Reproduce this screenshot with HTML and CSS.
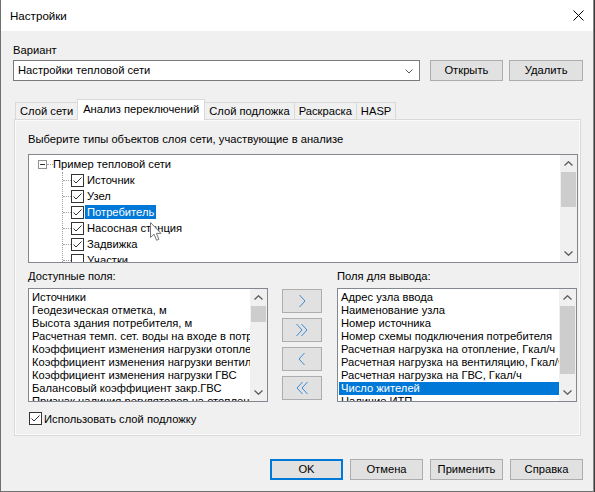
FILE: index.html
```html
<!DOCTYPE html>
<html lang="ru">
<head>
<meta charset="utf-8">
<title>Настройки</title>
<link rel="stylesheet" href="styles.css">
</head>
<body>
<div class="window">
  <div class="titlebar">
    <span class="title">Настройки</span>
    <svg class="close" width="11" height="11" viewBox="0 0 11 11"><path d="M0.5 0.5 L10.5 10.5 M10.5 0.5 L0.5 10.5" stroke="#000" stroke-width="1" fill="none"/></svg>
  </div>
  <div class="main">
    <div class="label">Вариант</div>
    <div class="variant-row">
      <div class="combo">
        <span class="combo-text">Настройки тепловой сети</span>
        <svg class="combo-arrow" width="8" height="5" viewBox="0 0 8 5"><path d="M0.5 0.5 L4 4 L7.5 0.5" stroke="#5a5a5a" fill="none"/></svg>
      </div>
      <button class="btn btn-top">Открыть</button>
      <button class="btn btn-top">Удалить</button>
    </div>
    <div class="tabs">
      <div class="tab">Слой сети</div>
      <div class="tab active">Анализ переключений</div>
      <div class="tab">Слой подложка</div>
      <div class="tab">Раскраска</div>
      <div class="tab">HASP</div>
    </div>
    <div class="panel">
      <div class="hint">Выберите типы объектов слоя сети, участвующие в анализе</div>
      <div class="tree box">
        <div class="tree-content">
          <div class="tree-root">
            <span class="expander"><span class="minus"></span></span><span class="root-dots"></span><span class="root-text">Пример тепловой сети</span>
          </div>
          <div class="tree-children">
            <div class="tree-item"><span class="hdots"></span><span class="cb checked"><svg viewBox="0 0 11 11"><path d="M1.5 5.5 L4 8 L9.5 2.5" stroke="#333" fill="none"/></svg></span><span class="item-text">Источник</span></div>
            <div class="tree-item"><span class="hdots"></span><span class="cb checked"><svg viewBox="0 0 11 11"><path d="M1.5 5.5 L4 8 L9.5 2.5" stroke="#333" fill="none"/></svg></span><span class="item-text">Узел</span></div>
            <div class="tree-item"><span class="hdots"></span><span class="cb checked"><svg viewBox="0 0 11 11"><path d="M1.5 5.5 L4 8 L9.5 2.5" stroke="#333" fill="none"/></svg></span><span class="item-text selected">Потребитель</span></div>
            <div class="tree-item"><span class="hdots"></span><span class="cb checked"><svg viewBox="0 0 11 11"><path d="M1.5 5.5 L4 8 L9.5 2.5" stroke="#333" fill="none"/></svg></span><span class="item-text">Насосная станция</span></div>
            <div class="tree-item"><span class="hdots"></span><span class="cb checked"><svg viewBox="0 0 11 11"><path d="M1.5 5.5 L4 8 L9.5 2.5" stroke="#333" fill="none"/></svg></span><span class="item-text">Задвижка</span></div>
            <div class="tree-item"><span class="hdots"></span><span class="cb"></span><span class="item-text">Участки</span></div>
          </div>
        </div>
        <div class="scrollbar">
          <div class="sb-btn"><svg width="9" height="5" viewBox="0 0 9 5"><path d="M0.5 4.5 L4.5 0.8 L8.5 4.5" stroke="#606060" stroke-width="1.4" fill="none"/></svg></div>
          <div class="sb-track"><div class="sb-thumb thumb-tree"></div></div>
          <div class="sb-btn"><svg width="9" height="5" viewBox="0 0 9 5"><path d="M0.5 0.5 L4.5 4.2 L8.5 0.5" stroke="#606060" stroke-width="1.4" fill="none"/></svg></div>
        </div>
        <svg class="cursor" width="13" height="20" viewBox="0 0 13 20"><path d="M0.5 0.5 L0.5 15.5 L4 12.2 L6.6 18.3 L8.9 17.3 L6.4 11.4 L11 11.4 Z" fill="#fff" stroke="#7a7a7a" stroke-width="1"/></svg>
      </div>
      <div class="fields">
        <div class="col">
          <div class="label">Доступные поля:</div>
          <div class="list box">
            <div class="list-content">
              <div class="li">Источники</div>
              <div class="li">Геодезическая отметка, м</div>
              <div class="li">Высота здания потребителя, м</div>
              <div class="li">Расчетная темп. сет. воды на входе в потребителя</div>
              <div class="li">Коэффициент изменения нагрузки отопления</div>
              <div class="li">Коэффициент изменения нагрузки вентиляции</div>
              <div class="li">Коэффициент изменения нагрузки ГВС</div>
              <div class="li">Балансовый коэффициент закр.ГВС</div>
              <div class="li">Признак наличия регуляторов на отоплении</div>
            </div>
            <div class="scrollbar">
              <div class="sb-btn"><svg width="9" height="5" viewBox="0 0 9 5"><path d="M0.5 4.5 L4.5 0.8 L8.5 4.5" stroke="#606060" stroke-width="1.4" fill="none"/></svg></div>
              <div class="sb-track"><div class="sb-thumb thumb-left"></div></div>
              <div class="sb-btn"><svg width="9" height="5" viewBox="0 0 9 5"><path d="M0.5 0.5 L4.5 4.2 L8.5 0.5" stroke="#606060" stroke-width="1.4" fill="none"/></svg></div>
            </div>
          </div>
        </div>
        <div class="arrows">
          <button class="btn abtn"><svg width="14" height="14" viewBox="0 0 14 14"><path d="M4.5 1 L10 7 L4.5 13" stroke="#3a8ad6" fill="none"/></svg></button>
          <button class="btn abtn"><svg width="16" height="14" viewBox="0 0 16 14"><path d="M2.5 1 L8 7 L2.5 13 M7.5 1 L13 7 L7.5 13" stroke="#3a8ad6" fill="none"/></svg></button>
          <button class="btn abtn"><svg width="14" height="14" viewBox="0 0 14 14"><path d="M9.5 1 L4 7 L9.5 13" stroke="#3a8ad6" fill="none"/></svg></button>
          <button class="btn abtn"><svg width="16" height="14" viewBox="0 0 16 14"><path d="M8.5 1 L3 7 L8.5 13 M13.5 1 L8 7 L13.5 13" stroke="#3a8ad6" fill="none"/></svg></button>
        </div>
        <div class="col">
          <div class="label">Поля для вывода:</div>
          <div class="list box">
            <div class="list-content">
              <div class="li">Адрес узла ввода</div>
              <div class="li">Наименование узла</div>
              <div class="li">Номер источника</div>
              <div class="li">Номер схемы подключения потребителя</div>
              <div class="li">Расчетная нагрузка на отопление, Гкал/ч</div>
              <div class="li">Расчетная нагрузка на вентиляцию, Гкал/ч</div>
              <div class="li">Расчетная нагрузка на ГВС, Гкал/ч</div>
              <div class="li selected">Число жителей</div>
              <div class="li">Наличие ИТП</div>
            </div>
            <div class="scrollbar">
              <div class="sb-btn"><svg width="9" height="5" viewBox="0 0 9 5"><path d="M0.5 4.5 L4.5 0.8 L8.5 4.5" stroke="#606060" stroke-width="1.4" fill="none"/></svg></div>
              <div class="sb-track"><div class="sb-thumb thumb-right"></div></div>
              <div class="sb-btn"><svg width="9" height="5" viewBox="0 0 9 5"><path d="M0.5 0.5 L4.5 4.2 L8.5 0.5" stroke="#606060" stroke-width="1.4" fill="none"/></svg></div>
            </div>
          </div>
        </div>
      </div>
      <div class="check-row">
        <span class="cb checked"><svg viewBox="0 0 11 11"><path d="M1.5 5.5 L4 8 L9.5 2.5" stroke="#333" fill="none"/></svg></span>
        <span class="check-label">Использовать слой подложку</span>
      </div>
    </div>
    <div class="footer">
      <button class="btn btn-foot default">OK</button>
      <button class="btn btn-foot">Отмена</button>
      <button class="btn btn-foot">Применить</button>
      <button class="btn btn-foot">Справка</button>
    </div>
  </div>
</div>
</body>
</html>
```

FILE: styles.css
```css
* { box-sizing: border-box; }
html, body { margin: 0; padding: 0; }
body {
  width: 595px;
  height: 492px;
  overflow: hidden;
  background: #3b3b3b;
  font-family: "Liberation Sans", Arial, sans-serif;
  font-size: 11.2px;
  color: #000;
}
.window {
  width: 594px;
  height: 492px;
  background: #f0f0f0;
  border-left: 1px solid #707070;
  border-right: 1px solid #8a8a8a;
  border-bottom: 1px solid #707070;
}
.titlebar {
  height: 31px;
  background: #fff;
  display: flex;
  align-items: center;
  padding-left: 9px;
}
.title { font-size: 11.6px; line-height: 14px; }
.close { margin-left: auto; margin-right: 9px; margin-top: -1px; }

.main { padding: 12px 10px 0 12px; }
.label { height: 14px; line-height: 14px; }

.variant-row {
  display: flex;
  margin-top: 3px;
  height: 21px;
}
.combo {
  width: 408px;
  height: 21px;
  background: #fff;
  border: 1px solid #7a7a7a;
  display: flex;
  align-items: center;
  padding-left: 4px;
  padding-right: 6px;
}
.combo-text { flex: 1; line-height: 19px; }
.combo-arrow { margin-top: 1px; }

.btn {
  font-family: inherit;
  font-size: 11.2px;
  color: #000;
  background: #e1e1e1;
  border: 1px solid #adadad;
  padding: 0;
  margin: 0;
  height: 21px;
  line-height: 19px;
}
.btn-top { width: 74px; margin-left: 6px; }
.btn-top:first-of-type { margin-left: 10px; }

.tabs {
  display: flex;
  align-items: flex-end;
  height: 20px;
  margin-top: 18px;
  margin-left: 2px;
}
.tab {
  height: 17px;
  line-height: 16px;
  padding: 0 4px;
  border: 1px solid #d9d9d9;
  border-bottom: none;
  background: #f0f0f0;
  margin-left: -1px;
  white-space: nowrap;
}
.tab:first-child { margin-left: 0; }
.tab.active {
  height: 21px;
  line-height: 18px;
  background: #fff;
  margin-bottom: -1px;
  position: relative;
  z-index: 1;
  padding: 0 5px;
}

.panel {
  margin-left: 1px;
  width: 567px;
  height: 317px;
  border: 1px solid #d9d9d9;
  box-shadow: inset 0 0 0 1px #fbfbfb;
  background: #f0f0f0;
  padding: 12px 2px 0 13px;
}
.hint { height: 14px; line-height: 14px; }

.box {
  background: #fff;
  border: 1px solid #828790;
  display: flex;
  position: relative;
}
.tree {
  margin-top: 8px;
  width: 550px;
  height: 109px;
}
.tree-content {
  flex: 1;
  overflow: hidden;
  padding-top: 1px;
}
.tree-root {
  height: 16px;
  display: flex;
  align-items: center;
  padding-left: 9px;
}
.expander {
  width: 9px;
  height: 9px;
  border: 1px solid #919191;
  display: flex;
  align-items: center;
  justify-content: center;
}
.minus { width: 5px; height: 1px; background: #333; }
.root-dots {
  width: 6px;
  height: 1px;
  border-top: 1px dotted #a0a0a0;
}
.root-text { line-height: 14px; }

.tree-children {
  margin-left: 33px;
  border-left: 1px dotted #a0a0a0;
}
.tree-item {
  height: 16px;
  display: flex;
  align-items: center;
}
.hdots {
  width: 8px;
  height: 1px;
  border-top: 1px dotted #a0a0a0;
}
.cb {
  width: 13px;
  height: 13px;
  border: 1px solid #333;
  background: #fff;
  display: flex;
  flex: none;
}
.cb svg { width: 11px; height: 11px; }
.item-text {
  margin-left: 1px;
  padding: 0 2px;
  height: 14px;
  line-height: 14px;
  white-space: nowrap;
}
.item-text.selected { background: #0078d7; color: #fff; }

.scrollbar {
  width: 17px;
  flex: none;
  background: #f0f0f0;
  display: flex;
  flex-direction: column;
}
.sb-btn {
  height: 17px;
  display: flex;
  align-items: center;
  justify-content: center;
  flex: none;
}
.sb-track { flex: 1; padding: 0 1px; }
.sb-thumb { background: #cdcdcd; }
.thumb-tree { height: 35px; }
.thumb-left { height: 16px; }
.thumb-right { height: 68px; }

.cursor {
  position: absolute;
  left: 121px;
  top: 67px;
}

.fields {
  display: grid;
  grid-template-columns: 240px 40px 241px;
  column-gap: 14px;
  margin-top: 6px;
}
.fields > .col:last-child { margin-left: 1px; }
.col .label { height: 14px; }
.list {
  margin-top: 5px;
  height: 114px;
}
.list-content {
  flex: 1;
  overflow: hidden;
  padding: 2px 0 0 1px;
}
.li {
  height: 13px;
  line-height: 13px;
  padding-left: 2px;
  white-space: nowrap;
}
.li.selected { background: #0078d7; color: #fff; }

.arrows {
  display: flex;
  flex-direction: column;
  gap: 5px;
  padding-top: 20px;
}
.abtn {
  width: 40px;
  height: 24px;
  display: flex;
  align-items: center;
  justify-content: center;
}

.check-row {
  display: flex;
  align-items: center;
  margin-top: 10px;
  margin-left: 1px;
  height: 13px;
}
.check-label { margin-left: 2px; line-height: 14px; }

.footer {
  display: flex;
  justify-content: flex-end;
  gap: 7px;
  margin-top: 23px;
  padding-right: 0;
}
.btn-foot { width: 73px; }
.btn.default { border: 2px solid #0078d7; line-height: 17px; }
```
